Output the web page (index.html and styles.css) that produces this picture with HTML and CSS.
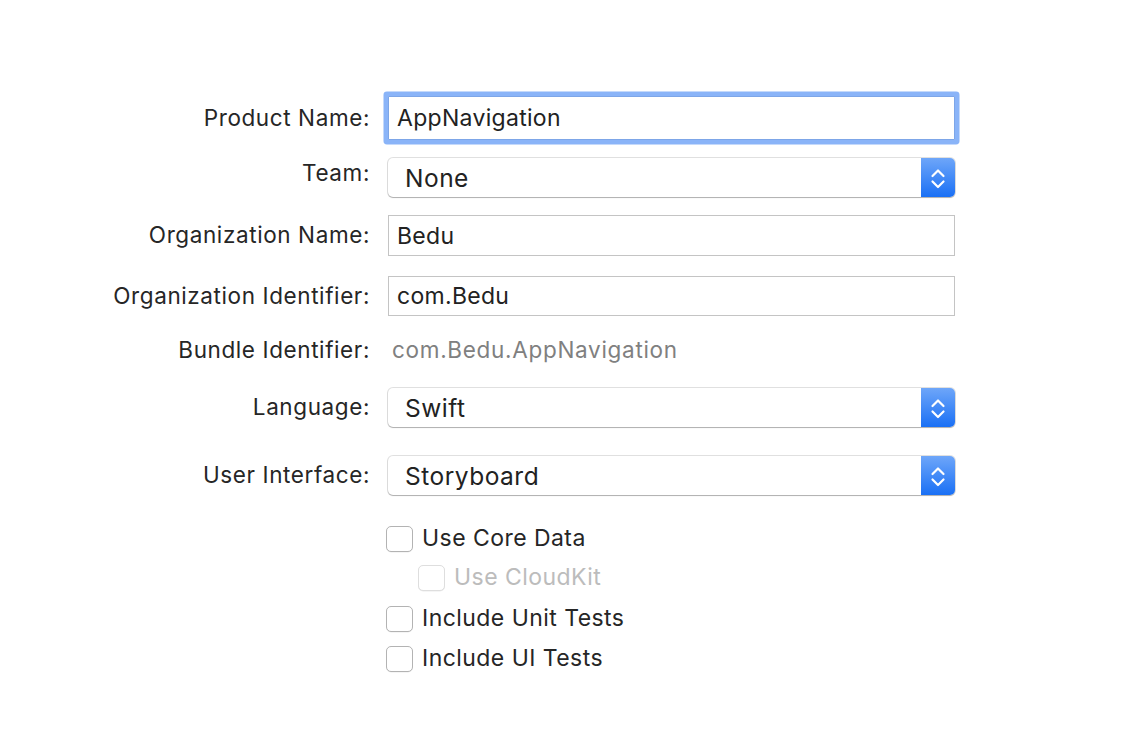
FILE: index.html
```html
<!DOCTYPE html>
<html>
<head>
<meta charset="utf-8">
<link rel="stylesheet" href="styles.css">
</head>
<body>
<div class="form">
  <div class="row r-product">
    <div class="lbl">Product Name:</div>
    <div class="field focused">AppNavigation</div>
  </div>
  <div class="row r-team">
    <div class="lbl lbl-up">Team:</div>
    <div class="popup"><span class="popup-text">None</span><span class="stepper"><svg width="34" height="39" viewBox="0 0 34 39"><polyline points="11.5,18 17,12.5 22.5,18"/><polyline points="11.5,23.5 17,29 22.5,23.5"/></svg></span></div>
  </div>
  <div class="row r-orgname">
    <div class="lbl">Organization Name:</div>
    <div class="field">Bedu</div>
  </div>
  <div class="row r-orgid">
    <div class="lbl">Organization Identifier:</div>
    <div class="field">com.Bedu</div>
  </div>
  <div class="row r-bundle">
    <div class="lbl">Bundle Identifier:</div>
    <div class="static">com.Bedu.AppNavigation</div>
  </div>
  <div class="row r-lang">
    <div class="lbl">Language:</div>
    <div class="popup"><span class="popup-text">Swift</span><span class="stepper"><svg width="34" height="39" viewBox="0 0 34 39"><polyline points="11.5,18 17,12.5 22.5,18"/><polyline points="11.5,23.5 17,29 22.5,23.5"/></svg></span></div>
  </div>
  <div class="row r-ui">
    <div class="lbl">User Interface:</div>
    <div class="popup"><span class="popup-text">Storyboard</span><span class="stepper"><svg width="34" height="39" viewBox="0 0 34 39"><polyline points="11.5,18 17,12.5 22.5,18"/><polyline points="11.5,23.5 17,29 22.5,23.5"/></svg></span></div>
  </div>
  <div class="row r-check r-core">
    <div class="lbl"></div>
    <div class="check"><span class="box"></span><span class="ctext">Use Core Data</span></div>
  </div>
  <div class="row r-check r-cloud">
    <div class="lbl"></div>
    <div class="check sub disabled"><span class="box"></span><span class="ctext">Use CloudKit</span></div>
  </div>
  <div class="row r-check r-unit">
    <div class="lbl"></div>
    <div class="check"><span class="box"></span><span class="ctext">Include Unit Tests</span></div>
  </div>
  <div class="row r-check r-uitest">
    <div class="lbl"></div>
    <div class="check"><span class="box"></span><span class="ctext">Include UI Tests</span></div>
  </div>
</div>
</body>
</html>
```
FILE: styles.css
```css
html, body {
  margin: 0;
  padding: 0;
  background: #ffffff;
}
body {
  font-family: "Inter", "Noto Sans", "Liberation Sans", sans-serif;
  color: #262626;
  width: 1136px;
  height: 750px;
  overflow: hidden;
}
.form {
  display: flex;
  flex-direction: column;
}
.row {
  display: grid;
  grid-template-columns: 370px 567px;
  column-gap: 18px;
  align-items: center;
}
.lbl {
  text-align: right;
  font-size: 22.5px;
  letter-spacing: 0.6px;
  color: #262626;
  white-space: nowrap;
  padding-bottom: 2px;
}
.lbl-up {
  padding-bottom: 11px;
}
.r-product { margin-top: 96px; height: 44px; }
.r-team { margin-top: 18px; height: 39px; }
.r-orgname { margin-top: 18px; height: 41px; }
.r-orgid { margin-top: 20px; height: 40px; }
.r-bundle { margin-top: 19px; height: 30px; }
.r-lang { margin-top: 23px; height: 39px; }
.r-ui { margin-top: 29px; height: 39px; }
.r-core { margin-top: 31px; height: 26px; }
.r-cloud { margin-top: 13px; height: 26px; }
.r-unit { margin-top: 15px; height: 26px; }
.r-uitest { margin-top: 14px; height: 26px; }

.field {
  box-sizing: border-box;
  height: 100%;
  border: 1px solid #c4c4c4;
  background: #fff;
  display: flex;
  align-items: center;
  padding-left: 8px;
  font-size: 23px;
  letter-spacing: 0.3px;
  color: #222;
}
.field.focused {
  border-color: #7da6e8;
  box-shadow: 0 0 0 4.5px #8ab4f8;
  border-radius: 1px;
}
.static {
  font-size: 22.5px;
  letter-spacing: 0.7px;
  color: #808080;
  padding-left: 4px;
  padding-bottom: 2px;
}
.popup {
  box-sizing: border-box;
  height: 39px;
  display: flex;
  align-items: stretch;
  border-radius: 5px;
  background: #fff;
  box-shadow: 0 0 0 1px rgba(0,0,0,0.12), 0 1px 1px rgba(0,0,0,0.22);
  overflow: hidden;
}
.popup-text {
  flex: 1;
  display: flex;
  align-items: center;
  padding-left: 17px;
  font-size: 24.5px;
  letter-spacing: 0.5px;
  color: #222;
}
.stepper {
  width: 34px;
  background: linear-gradient(#6ea6f9, #1a70f5);
  display: flex;
}
.stepper svg polyline {
  fill: none;
  stroke: #ffffff;
  stroke-width: 2.2;
  stroke-linecap: round;
  stroke-linejoin: round;
}
.check {
  display: flex;
  align-items: center;
  gap: 9px;
  margin-left: -2px;
  height: 26px;
  font-size: 23px;
  letter-spacing: 0.45px;
  color: #262626;
}
.ctext {
  line-height: 24px;
  padding-bottom: 2px;
}
.check .box {
  box-sizing: border-box;
  width: 27px;
  height: 26px;
  border: 1px solid #b3b3b3;
  border-radius: 5px;
  background: #fff;
  box-shadow: 0 0.5px 0.5px rgba(0,0,0,0.08);
}
.check.sub {
  margin-left: 30px;
}
.check.disabled {
  color: #bcbcbc;
}
.check.disabled .box {
  border-color: #dedede;
}
```
